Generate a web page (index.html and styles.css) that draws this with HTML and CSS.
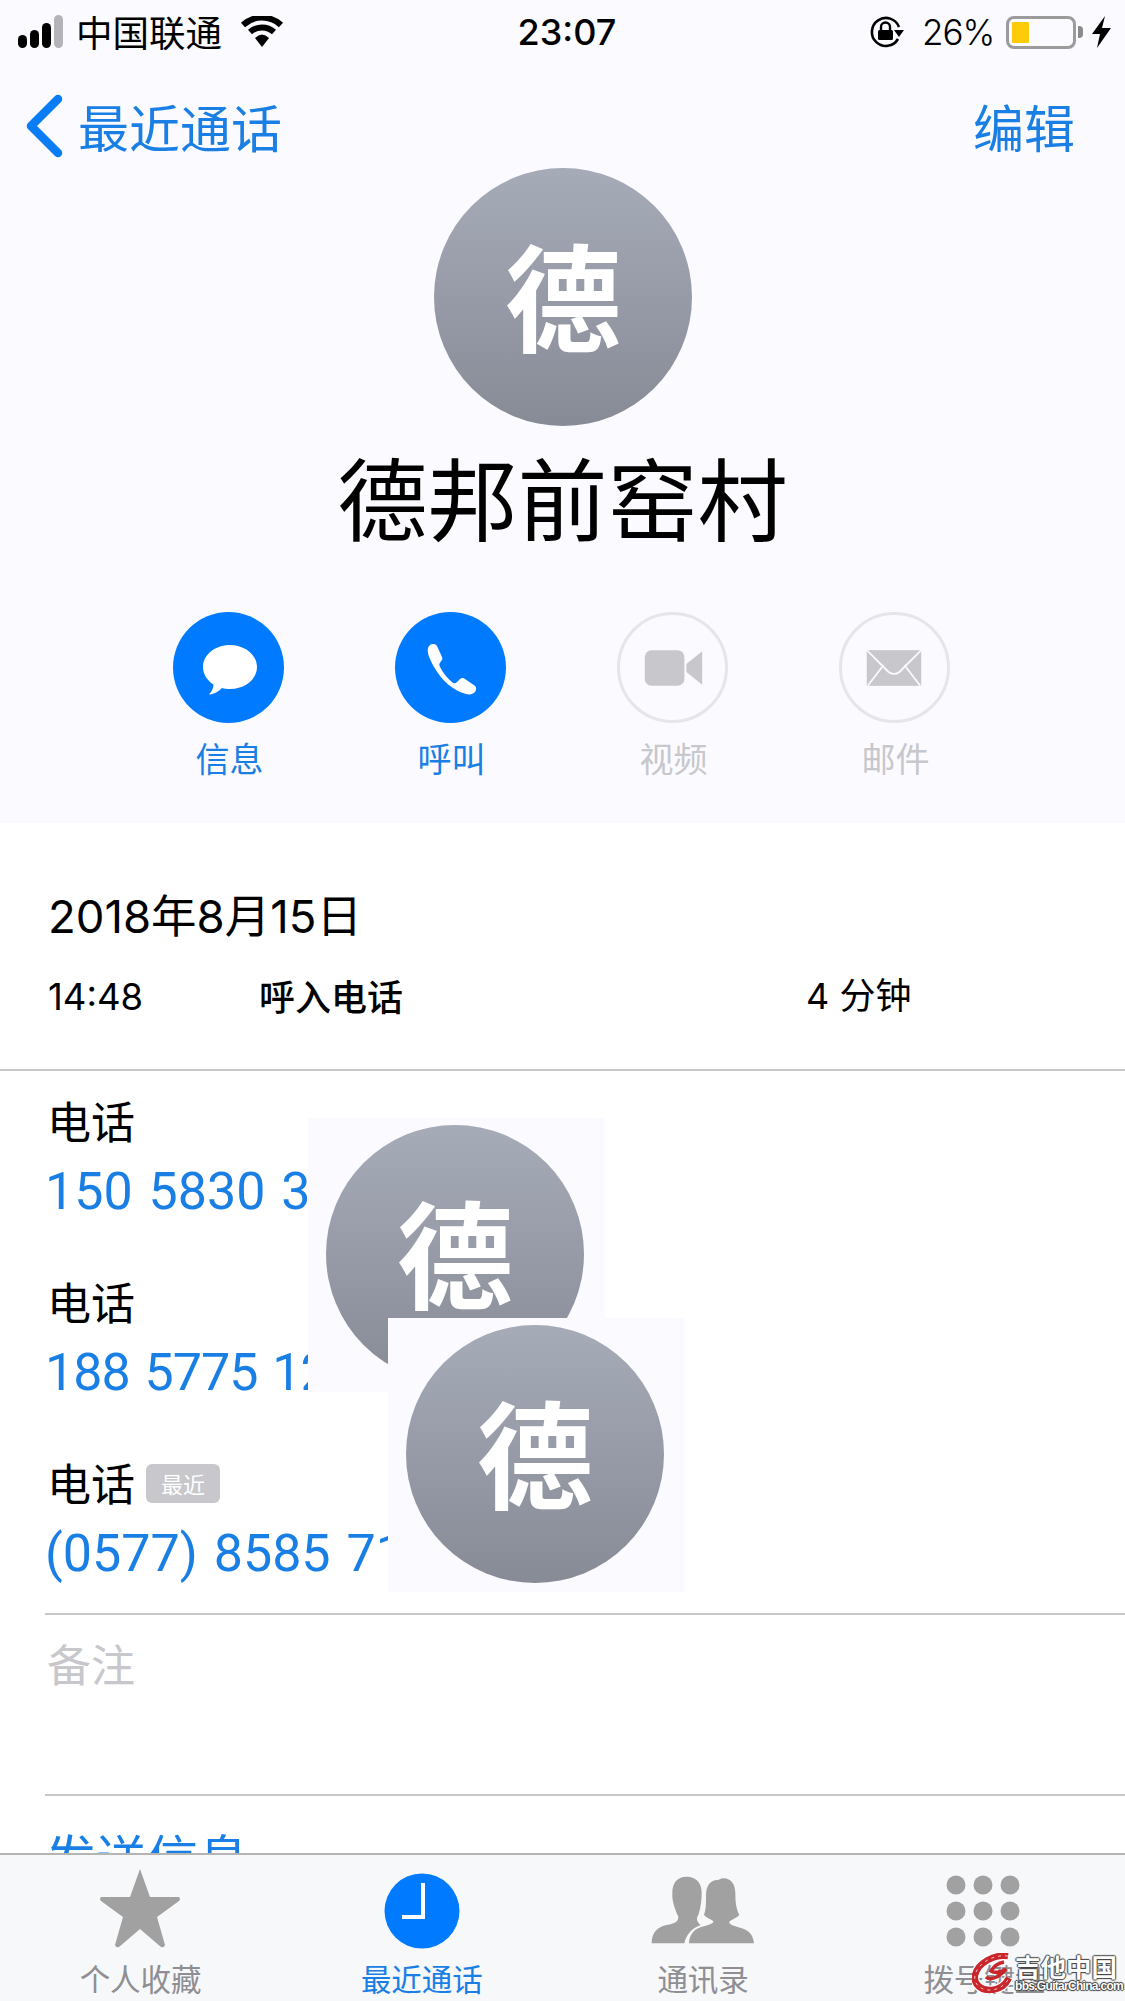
FILE: index.html
```html
<!DOCTYPE html>
<html lang="zh-CN">
<head>
  <meta charset="UTF-8">
  <title>最近通话</title>
  <link rel="stylesheet" href="styles.css">
</head>
<body>
<div class="phone">
  <div class="main">
    <header class="top">
      <div class="status">
        <div class="status-left">
          <svg class="signal" width="50" height="36" viewBox="0 0 50 36">
            <rect x="0" y="21" width="9" height="13" rx="4.5" fill="#000"/>
            <rect x="12" y="16" width="9" height="18" rx="4.5" fill="#000"/>
            <rect x="24" y="9" width="9" height="25" rx="4.5" fill="#000"/>
            <rect x="36" y="1" width="9" height="33" rx="4.5" fill="#b4b4b8"/>
          </svg>
          <span class="carrier">中国联通</span>
          <svg class="wifi" width="44" height="32" viewBox="0 0 44 32">
            <path d="M3 9 A28 28 0 0 1 41 9" fill="none" stroke="#000" stroke-width="6"/>
            <path d="M10 16 A18 18 0 0 1 34 16" fill="none" stroke="#000" stroke-width="6"/>
            <path d="M15 22 Q22 15 29 22 L22 31 Z" fill="#000"/>
          </svg>
        </div>
        <div class="time">23:07</div>
        <div class="status-right">
          <svg class="lock" width="36" height="34" viewBox="0 0 36 34">
            <path d="M29 24 A14 14 0 1 1 30 12" fill="none" stroke="#000" stroke-width="2.6"/>
            <path d="M25 15 L35 15 L30 22 Z" fill="#000"/>
            <rect x="9" y="15" width="15" height="10" rx="1.5" fill="#000"/>
            <path d="M12 15 V12 A4.500 4.500 0 0 1 21 12 V15" fill="none" stroke="#000" stroke-width="2.400"/>
          </svg>
          <span class="percent">26%</span>
          <div class="battery"><div class="battery-fill"></div></div>
          <div class="battery-cap"></div>
          <svg class="bolt" width="19" height="32" viewBox="0 0 19 32">
            <path d="M13 0 L0 18 L8 18 L5 32 L19 12 L10 12 Z" fill="#000"/>
          </svg>
        </div>
      </div>

      <nav class="nav">
        <a class="back">
          <svg width="38" height="64" viewBox="0 0 38 64">
            <path d="M33 5 L6 32 L33 59" fill="none" stroke="#0a7cf5" stroke-width="8.500" stroke-linecap="round" stroke-linejoin="round"/>
          </svg>
          <span>最近通话</span>
        </a>
        <a class="edit">编辑</a>
      </nav>

      <div class="avatar avatar-big">德</div>
      <h1 class="name">德邦前窑村</h1>

      <div class="actions">
        <div class="action">
          <div class="action-circle on">
            <svg width="110" height="110" viewBox="0 0 110 110">
              <path d="M56 32 C71 32 83 42 83 54 C83 66 71 76 56 76 C53 76 50 75.600 48 75 C45 78 41 81 35 81.500 C38 78 39.500 75 39.500 71.500 C33 67.500 29 61 29 54 C29 42 41 32 56 32 Z" fill="#fff"/>
            </svg>
          </div>
          <span class="action-label">信息</span>
        </div>
        <div class="action">
          <div class="action-circle on">
            <svg width="110" height="110" viewBox="0 0 110 110">
              <path d="M34 32 C36 30.500 39.500 30.500 41 33 L46 44 C47 46 46 47.500 44.500 49 C43 50.500 43 52 44 54 C47 60 51 65 56.500 69.500 C58 70.500 59.500 70.500 61 69 L64 66 C65.500 64.500 67.500 64.500 69 66 L78.500 72.500 C80.500 74 80.500 76 79.500 78 C78 81 74 82 70 81 C58 78 46 68 38 54 C33 45 29 36 34 32 Z" fill="#fff"/>
            </svg>
          </div>
          <span class="action-label">呼叫</span>
        </div>
        <div class="action off">
          <div class="action-circle">
            <svg width="106" height="106" viewBox="0 0 106 106">
              <rect x="25" y="35" width="40" height="36" rx="7" fill="#c7c7cc"/>
              <path d="M67 49 L83 36 V70 L67 57 Z" fill="#c7c7cc"/>
            </svg>
          </div>
          <span class="action-label">视频</span>
        </div>
        <div class="action off">
          <div class="action-circle">
            <svg width="106" height="106" viewBox="0 0 106 106">
              <rect x="25" y="35" width="55" height="36" fill="#c7c7cc"/>
              <path d="M25 35 L47 57 Q52.500 61 58 57 L80 35 M26 71 L42 50 M79 71 L63 50" fill="none" stroke="#fbfbff" stroke-width="1.800"/>
            </svg>
          </div>
          <span class="action-label">邮件</span>
        </div>
      </div>
    </header>

    <section class="calls">
      <div class="call-date">2018年8月15日</div>
      <div class="call-row">
        <span class="call-time">14:48</span>
        <span class="call-type">呼入电话</span>
        <span class="call-len">4 分钟</span>
      </div>
    </section>

    <section class="details">
      <div class="field">
        <div class="field-label">电话</div>
        <div class="field-value">150 5830 3</div>
      </div>
      <div class="field">
        <div class="field-label">电话</div>
        <div class="field-value tight">188 5775 12</div>
      </div>
      <div class="field">
        <div class="field-label">电话 <span class="tag">最近</span></div>
        <div class="field-value">(0577) 8585 71</div>
      </div>
      <div class="notes">备注</div>
      <div class="send">发送信息</div>

      <div class="patch patch-one"><div class="avatar">德</div></div>
      <div class="patch patch-two"><div class="avatar">德</div></div>
    </section>
  </div>

  <footer class="tabbar">
    <div class="tab">
      <svg class="tab-star" width="90" height="84" viewBox="0 0 90 84">
        <path d="M45 2 L55 30 L84 30 Q86 32 84 34 L62 50 L70 78 Q69 81 66 80 L45 62 L24 80 Q21 81 20 78 L28 50 L6 34 Q4 32 6 30 L35 30 Z" fill="#a1a1a1"/>
      </svg>
      <span>个人收藏</span>
    </div>
    <div class="tab active">
      <svg width="90" height="84" viewBox="0 0 90 84">
        <circle cx="45" cy="44" r="37.500" fill="#007aff"/>
        <path d="M46 16 V50 H25" fill="none" stroke="#fff" stroke-width="4"/>
      </svg>
      <span>最近通话</span>
    </div>
    <div class="tab">
      <svg width="110" height="84" viewBox="54 21 330 252">
        <path d="M170 50 C200 50 215 70 215 100 C215 120 213 140 205 165 C198 175 200 185 212 195 C185 205 168 225 163 250 H65 C65 215 85 200 110 195 C135 190 145 185 145 170 C135 150 125 120 127 100 C127 70 140 50 170 50 Z" fill="#a1a1a1"/>
        <path d="M280 55 C272 55 268 60 262 60 C240 60 228 80 228 105 C228 130 228 150 222 165 C235 178 250 180 250 185 C250 190 235 195 215 200 C190 208 178 225 177 250 H372 C370 225 355 210 335 205 C315 198 298 195 298 187 C298 180 315 178 328 165 C318 145 316 125 316 100 C316 75 305 55 280 55 Z" fill="#a1a1a1"/>
      </svg>
      <span>通讯录</span>
    </div>
    <div class="tab">
      <svg class="tab-dial" width="90" height="84" viewBox="0 0 90 84">
        <g fill="#a1a1a1">
          <circle cx="18" cy="18" r="9.500"/><circle cx="45" cy="18" r="9.500"/><circle cx="72" cy="18" r="9.500"/>
          <circle cx="18" cy="44" r="9.500"/><circle cx="45" cy="44" r="9.500"/><circle cx="72" cy="44" r="9.500"/>
          <circle cx="18" cy="70" r="9.500"/><circle cx="45" cy="70" r="9.500"/><circle cx="72" cy="70" r="9.500"/>
        </g>
      </svg>
      <span>拨号键盘</span>
    </div>
    <div class="watermark">
      <svg width="43" height="40" viewBox="0 0 43 40">
        <path d="M36 3 C22 1 6 10 3 22 C1 32 10 38 20 37 C28 36 34 31 37 25" fill="none" stroke="#fff" stroke-width="9"/>
        <path d="M36 3 C22 1 6 10 3 22 C1 32 10 38 20 37 C28 36 34 31 37 25" fill="none" stroke="#c8262a" stroke-width="6.500"/>
        <path d="M36 3 C22 1 6 10 3 22 C1 32 10 38 20 37 C28 36 34 31 37 25" fill="none" stroke="#f3c4c4" stroke-width="1" stroke-dasharray="3 4"/>
        <path d="M14 24 C18 28 28 24 34 16 C28 20 22 20 19 18 C22 13 27 10 32 9" fill="none" stroke="#c8262a" stroke-width="3.500"/>
      </svg>
      <div class="watermark-text">
        <div class="watermark-cn">吉他中国</div>
        <div class="watermark-url">bbs.GuitarChina.com</div>
      </div>
    </div>
  </footer>
</div>
</body>
</html>
```

FILE: styles.css
```css
* { box-sizing: border-box; }
html, body { margin: 0; padding: 0; }
body { font-family: "Noto Sans CJK SC", sans-serif; background: #fff; color: #000; }
.phone { width: 1125px; height: 2001px; display: flex; flex-direction: column; overflow: hidden; }
.main { flex: 1; min-height: 0; overflow: hidden; }

.top { background: #fbfbff; height: 823px; }

.status { height: 64px; padding: 0 0 0 18px; display: flex; align-items: center; }
.status-left { display: flex; align-items: center; width: 500px; }
.signal { margin-right: 8px; }
.carrier { font-size: 36.500px; font-weight: 400; line-height: 1; }
.wifi { margin-left: 18px; }
.time { font-family: Inter, sans-serif; font-weight: 500; font-size: 36px; width: 100px; margin-left: -1px; text-align: center; }
.status-right { display: flex; align-items: center; margin-left: 252px; }
.percent { font-family: Inter, sans-serif; font-size: 35px; font-weight: 300; margin-left: 17px; letter-spacing: -1px; }
.battery { width: 70px; height: 33px; border: 3px solid #9b9b9b; border-radius: 8px; padding: 3px; margin-left: 12px; background: #fbfbff; }
.battery-fill { width: 17px; height: 100%; background: #fdcb0a; border-radius: 1px; }
.battery-cap { width: 5px; height: 12px; background: #8a8a8a; border-radius: 0 4px 4px 0; margin-left: 2px; }
.bolt { margin-left: 9px; }

.nav { height: 104px; padding: 20px 50px 0 25px; display: flex; align-items: center; justify-content: space-between; }
.back { display: flex; align-items: center; gap: 15px; }
.back span, .edit { font-size: 51px; font-weight: 400; color: #1a7fe4; line-height: 1; }

.avatar { width: 258px; height: 258px; border-radius: 50%; background: linear-gradient(#a6abb8, #868b96); color: #fff; font-size: 116px; line-height: 248px; text-align: center; font-weight: 700; }
.avatar-big { margin-left: 434px; }
.name { margin: 5px 0 0; text-align: center; font-size: 90px; font-weight: 400; line-height: 128px; }

.actions { display: flex; gap: 111px; padding-left: 173px; margin-top: 53px; }
.action { width: 111px; display: flex; flex-direction: column; align-items: center; }
.action-circle { width: 111px; height: 111px; border-radius: 50%; display: flex; align-items: center; justify-content: center; border: 3px solid #e5e5ea; }
.action-circle.on { background: #007aff; border: 0; }
.action-label { font-size: 34px; font-weight: 400; color: #1a7fe4; margin: 12px 0 0 2px; line-height: 46px; white-space: nowrap; }
.off .action-label { color: #c7c7cc; }

.calls { height: 248px; padding: 66px 0 0 48px; border-bottom: 2px solid #c8c8cc; }
.call-date { font-size: 45.500px; font-family: Inter, "Noto Sans CJK SC", sans-serif; font-weight: 400; line-height: 56px; white-space: nowrap; }
.call-row { display: flex; align-items: center; margin-top: 24px; font-size: 36px; line-height: 50px; }
.call-time { width: 211px; font-family: Inter, sans-serif; font-weight: 400; font-size: 36.500px; margin-top: 3px; }
.call-type { width: 547px; font-weight: 500; margin-top: -2px; }
.call-len { font-weight: 400; font-family: Inter, "Noto Sans CJK SC", sans-serif; }

.details { position: relative; margin-top: -1px; padding-left: 45px; height: 790px; }
.field { height: 181px; padding-top: 20px; }
.field-label { font-size: 44px; font-weight: 400; line-height: 60px; padding-left: 2px; display: flex; align-items: center; gap: 11px; }
.tag { font-size: 22px; background: #c7c7cc; color: #fff; border-radius: 6px; width: 74px; height: 39px; line-height: 39px; margin-top: 2px; text-align: center; font-weight: 400; }
.field-value { font-family: Roboto, sans-serif; color: #1a7fe4; font-size: 52px; line-height: 60px; margin-top: 12px; white-space: nowrap; word-spacing: 3px; }
.field-value.tight { letter-spacing: -1px; }
.notes { border-top: 2px solid #c8c8cc; color: #c7c7cc; font-size: 44px; font-weight: 400; height: 181px; padding: 18px 0 0 2px; line-height: 60px; }
.send { border-top: 2px solid #c8c8cc; color: #1a7fe4; font-size: 51px; font-weight: 400; padding-top: 30px; line-height: 60px; }

.patch { position: absolute; width: 297px; height: 274px; background: #fbfbff; padding: 7px 0 0 18px; }
.patch-one { left: 308px; top: 48px; }
.patch-two { left: 388px; top: 248px; }

.tabbar { height: 148px; background: #f7f8fa; border-top: 2px solid #b4b4b4; display: flex; position: relative; flex: none; }
.tab { flex: 1; display: flex; flex-direction: column; align-items: center; color: #8e8e93; font-size: 30.500px; font-weight: 400; line-height: 36px; padding-top: 12px; }
.tab svg { height: 84px; flex: none; }
.tab span { margin-top: 9px; }
.tab.active { color: #1a7fe4; }
.tab-star { margin-right: 2px; }
.tab-dial { margin-right: 3px; }

.watermark { position: absolute; left: 972px; top: 98px; display: flex; align-items: flex-start; }
.watermark-text { width: 104px; }
.watermark-cn { color: #fff; font-size: 25.500px; line-height: 26px; font-weight: 700; text-shadow: 1px 0 1px #444, -1px 0 1px #444, 0 1px 1px #444, 0 -1px 1px #444; white-space: nowrap; }
.watermark-url { font-family: "Liberation Sans", sans-serif; color: #fff; font-size: 12px; font-weight: 700; line-height: 12px; margin-top: 1px; letter-spacing: -0.7px; text-shadow: 1px 0 1px #333, -1px 0 1px #333, 0 1px 1px #333, 0 -1px 1px #333; white-space: nowrap; }
```
